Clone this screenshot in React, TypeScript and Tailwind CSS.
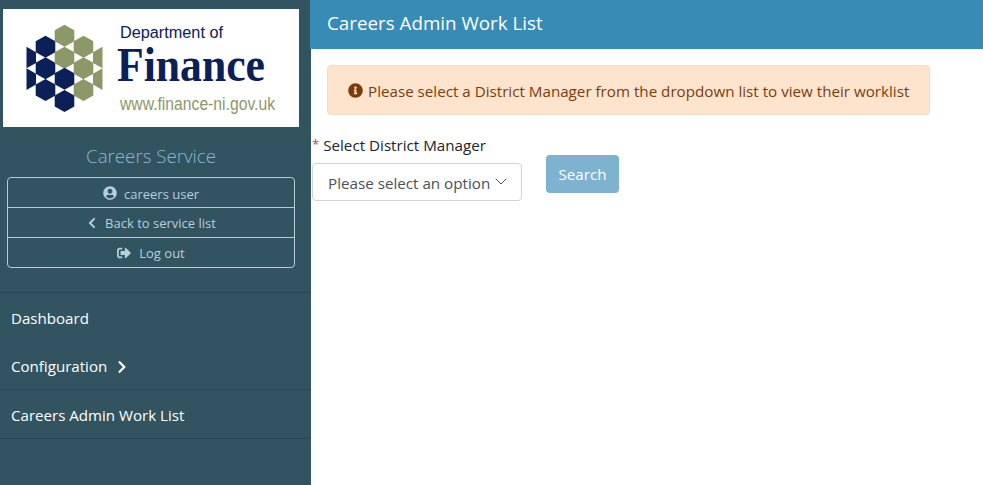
import { FaChevronLeft, FaChevronRight, FaInfoCircle, FaSignOutAlt, FaUserCircle } from "react-icons/fa";

const navy = "#0c2058";
const olive = "#8d9869";

function hexPoints(cx: number, cy: number) {
  return [
    [cx, cy - 11],
    [cx + 9.8, cy - 5.5],
    [cx + 9.8, cy + 5.5],
    [cx, cy + 11],
    [cx - 9.8, cy + 5.5],
    [cx - 9.8, cy - 5.5],
  ]
    .map((p) => p.join(","))
    .join(" ");
}

const hexes = [
  { x: 42.5, y: 37.7, fill: navy },
  { x: 42.5, y: 59.3, fill: navy },
  { x: 42.5, y: 81, fill: navy },
  { x: 61.5, y: 26.7, fill: olive },
  { x: 61.5, y: 48.7, fill: olive },
  { x: 61.5, y: 69.8, fill: navy },
  { x: 61.5, y: 92, fill: navy },
  { x: 80.5, y: 37.7, fill: olive },
  { x: 80.5, y: 59.3, fill: olive },
  { x: 80.5, y: 81, fill: olive },
];

function Logo() {
  return (
    <svg viewBox="0 0 296 118" className="block h-[118px] w-[296px]">
      <rect width="296" height="118" fill="#ffffff" />
      {hexes.map((h, i) => (
        <polygon key={i} points={hexPoints(h.x, h.y)} fill={h.fill} />
      ))}
      {/* half hexes at both sides */}
      <polygon points="23.5,37.7 33,43.2 33,54 23.5,59.3" fill={navy} />
      <polygon points="23.5,59.3 33,64.8 33,75.6 23.5,81" fill={navy} />
      <polygon points="99.5,37.7 90,43.2 90,54 99.5,59.3" fill={olive} />
      <polygon points="99.5,59.3 90,64.8 90,75.6 99.5,81" fill={olive} />
      <text
        x="117"
        y="29"
        fontFamily="'Liberation Sans', sans-serif"
        fontSize="16"
        textLength="103"
        lengthAdjust="spacingAndGlyphs"
        fill={navy}
      >
        Department of
      </text>
      <text
        x="114"
        y="72"
        fontFamily="'Liberation Serif', serif"
        fontSize="49"
        fontWeight="700"
        textLength="148"
        lengthAdjust="spacingAndGlyphs"
        fill={navy}
      >
        Finance
      </text>
      <text
        x="117"
        y="101"
        fontFamily="'Liberation Sans', sans-serif"
        fontSize="17.5"
        textLength="155"
        lengthAdjust="spacingAndGlyphs"
        fill={olive}
      >
        www.finance-ni.gov.uk
      </text>
    </svg>
  );
}

export default function App() {
  return (
    <div className="flex h-[485px] w-[983px] overflow-hidden bg-white font-['Open_Sans',sans-serif]">
      {/* Sidebar */}
      <div className="w-[311px] shrink-0 bg-[#315460] pt-[9px]">
        <div className="pl-[3px]">
          <Logo />
        </div>
        <div className="mt-[14px] w-[302px] text-center text-[18.7px] leading-[30px] font-light text-[#8db8cc]">Careers Service</div>
        <div className="mx-[7px] mt-[6px] w-[288px] rounded-[4px] border border-[#b5ccd6] text-[13px] text-[#b5d0dc]">
          <div className="flex h-[30px] items-center justify-center gap-[7px] border-b border-[#b5ccd6] pt-[4px]">
            <FaUserCircle className="mb-[4px] text-[14px]" />
            <span>careers user</span>
          </div>
          <div className="flex h-[30px] items-center justify-center gap-[7px] border-b border-[#b5ccd6] pt-[3px]">
            <FaChevronLeft className="mb-[2px] text-[12px]" />
            <span>Back to service list</span>
          </div>
          <div className="flex h-[29px] items-center justify-center gap-[8px] pt-[3px]">
            <FaSignOutAlt className="mb-[2px] text-[14px]" />
            <span>Log out</span>
          </div>
        </div>
        <div className="mt-[24px] border-t border-[#2a4853] text-[15.1px] text-white">
          <div className="flex h-[48px] items-center pl-[11px] pt-[2px]">Dashboard</div>
          <div className="flex h-[49px] items-center gap-[8px] border-b border-[#2a4853] pl-[11px] pt-[3px]">
            <span>Configuration</span>
            <FaChevronRight className="text-[14px]" />
          </div>
          <div className="flex h-[49px] items-center border-b border-[#2a4853] pl-[11px] pt-[3px]">Careers Admin Work List</div>
        </div>
      </div>

      {/* Main */}
      <div className="relative -ml-px flex-1">
        <div className="flex h-[49px] items-center bg-[#378bb4] pb-[3px] pl-[17px] text-[18.8px] text-white">Careers Admin Work List</div>
        <div className="ml-[17px] mt-[16px] flex h-[50px] w-[603px] items-center gap-[5px] rounded-[4px] border border-[#fdd9bd] bg-[#fee3cd] pl-[20px] text-[15.18px] text-[#7a3d0a]">
          <FaInfoCircle className="text-[15px]" />
          <span className="pt-[2px]">Please select a District Manager from the dropdown list to view their worklist</span>
        </div>
        <div className="ml-[2px] mt-[18px] flex items-start">
          <div className="w-[210px]">
            <div className="flex h-[24px] items-center text-[15.2px] text-[#212529]">
              <span className="mr-[4px] text-[13px] text-[#e0344a]">*</span>
              <span>Select District Manager</span>
            </div>
            <div className="mt-[6px] flex h-[38px] items-center rounded-[4px] border border-[#ced4da] bg-white pl-[15px] text-[15.2px] text-[#495057]">
              <span className="pt-[2px]">Please select an option</span>
              <svg viewBox="0 0 12 7" className="ml-[5px] mb-[2px] h-[7px] w-[12px]" fill="none" stroke="#495057" strokeWidth="1">
                <path d="M0.7 0.7 6 6 11.3 0.7" />
              </svg>
            </div>
          </div>
          <div className="ml-[24px] mt-[22px] flex h-[38px] w-[73px] items-center justify-center rounded-[4px] bg-[#7db3cf] text-[15.2px] text-white">
            Search
          </div>
        </div>
      </div>
    </div>
  );
}
